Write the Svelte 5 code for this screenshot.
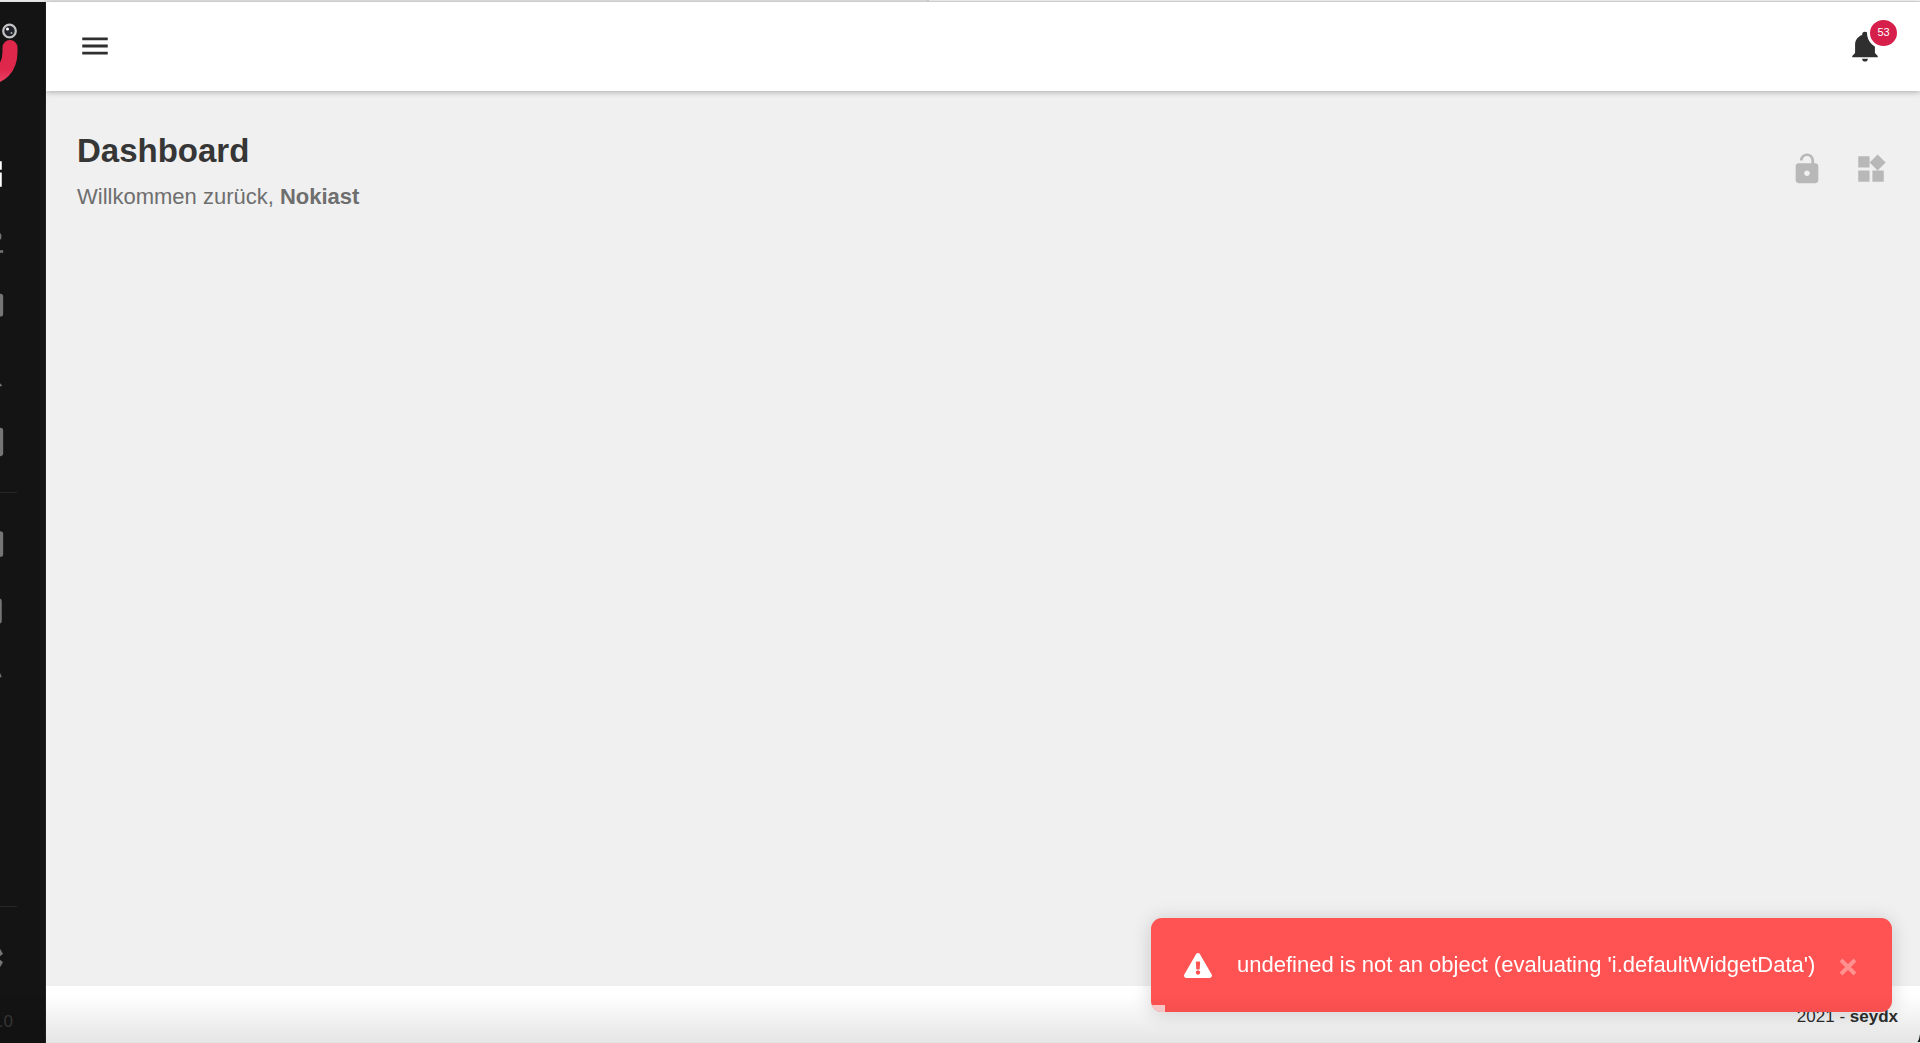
<script>
    const icons = {
        dashboard: "M13 3v6h8V3M13 21h8V11h-8M3 21h8v-6H3M3 13h8V3H3z",
        users: "M18 6a2.800 2.800 0 1 1 0 5.600 2.800 2.800 0 1 1 0-5.600M9 5a4 4 0 1 0 .1 0M2 18.500h20v1.800H2z",
        cameras:
            "M4 6H2v14a2 2 0 0 0 2 2h14v-2H4V6m16-4H8a2 2 0 0 0-2 2v12a2 2 0 0 0 2 2h12a2 2 0 0 0 2-2V4a2 2 0 0 0-2-2z",
        bell: "M21 19v1H3v-1l2-2v-6c0-3.100 2.030-5.830 5-6.710V4a2 2 0 0 1 4 0v.290c2.970.880 5 3.610 5 6.710v6l2 2m-7 2a2 2 0 0 1-4 0",
        camview: "M4 2h16a2 2 0 0 1 2 2v16a2 2 0 0 1-2 2H4a2 2 0 0 1-2-2V4a2 2 0 0 1 2-2z",
        console: "M4 3h16a2 2 0 0 1 2 2v14a2 2 0 0 1-2 2H4a2 2 0 0 1-2-2V5a2 2 0 0 1 2-2z",
        config: "M5 3h14a2 2 0 0 1 2 2v14a2 2 0 0 1-2 2H5a2 2 0 0 1-2-2V5a2 2 0 0 1 2-2z",
        utilization: "M3 11.500a9 9 0 0 1 16.500-4l1.500 4z",
        settings:
            "M12 15.500A3.500 3.500 0 0 1 8.500 12 3.500 3.500 0 0 1 12 8.500a3.500 3.500 0 0 1 3.500 3.500 3.500 3.500 0 0 1-3.500 3.500m7.430-2.530c.04-.32.07-.64.07-.97s-.03-.66-.07-1l2.110-1.630c.19-.15.24-.42.12-.64l-2-3.460c-.12-.22-.39-.31-.61-.22l-2.490 1c-.52-.39-1.060-.73-1.690-.98l-.37-2.650A.506.506 0 0 0 14 2h-4c-.25 0-.46.18-.5.42l-.37 2.650c-.63.25-1.170.59-1.690.98l-2.490-1c-.22-.09-.49 0-.61.22l-2 3.460c-.13.22-.07.49.12.64L4.570 11c-.04.34-.07.67-.07 1s.03.65.07.97l-2.110 1.660c-.19.15-.25.42-.12.64l2 3.460c.12.22.39.3.61.22l2.490-1.010c.52.4 1.060.74 1.690.99l.37 2.650c.04.24.25.42.5.42h4c.25 0 .46-.18.5-.42l.37-2.650c.63-.26 1.170-.59 1.690-.99l2.490 1.010c.22.08.49 0 .61-.22l2-3.460c.12-.22.07-.49-.12-.64z",
        menu: "M3 6h18v2H3zM3 11h18v2H3zM3 16h18v2H3z",
        unlock: "M12 17c1.100 0 2-.9 2-2s-.9-2-2-2-2 .9-2 2 .9 2 2 2zm6-9h-1V6c0-2.760-2.240-5-5-5S7 3.240 7 6h1.900c0-1.710 1.390-3.100 3.100-3.100 1.710 0 3.100 1.390 3.100 3.100v2H6c-1.100 0-2 .9-2 2v10c0 1.100.9 2 2 2h12c1.100 0 2-.9 2-2V10c0-1.100-.9-2-2-2z",
        widgets:
            "M13 13v8h8v-8h-8zM3 21h8v-8H3v8zM3 3v8h8V3H3zm13.660-1.310L11 7.340 16.660 13l5.660-5.660-5.660-5.650z",
    };

    const mainNav = ["dashboard", "users", "cameras", "bell", "camview"];
    const systemNav = ["console", "config", "utilization"];

    let showToast = $state(true);
</script>

{#snippet icon(name)}
    <svg class="icon" viewBox="0 0 24 24" aria-hidden="true">
        <path d={icons[name]} fill-rule="evenodd" />
    </svg>
{/snippet}

<div class="app">
    <div class="tab-strip"><span></span></div>

    <div class="layout">
        <aside class="sidebar">
            <a class="logo" href="#dashboard" aria-label="home">
                <svg viewBox="0 0 58 72" aria-hidden="true">
                    <defs>
                        <linearGradient id="logo-red" gradientUnits="userSpaceOnUse" x1="0" y1="24" x2="0" y2="72">
                            <stop offset="0.6" stop-color="#df274c" />
                            <stop offset="1" stop-color="#f04a6c" />
                        </linearGradient>
                    </defs>
                    <path
                        d="M8 31.500V36c0 33 42 33 42 0v-4.500"
                        fill="none"
                        stroke="url(#logo-red)"
                        stroke-width="15"
                        stroke-linecap="round"
                    />
                    <circle cx="49.500" cy="15" r="6.300" fill="#20232a" stroke="#c4c4c4" stroke-width="2.200" />
                    <circle cx="47.500" cy="13" r="1.500" fill="#ffffff" />
                    <circle cx="51.500" cy="17" r="1" fill="#aaaaaa" />
                </svg>
            </a>

            <nav>
                {#each mainNav as name}
                    <a class="nav-item" class:active={name === "dashboard"} href="#{name}" aria-label={name}>
                        {@render icon(name)}
                    </a>
                {/each}
                <hr />
                {#each systemNav as name}
                    <a class="nav-item" href="#{name}" aria-label={name}>
                        {@render icon(name)}
                    </a>
                {/each}
            </nav>

            <div class="sidebar-bottom">
                <hr />
                <a class="nav-item" href="#settings" aria-label="settings">
                    {@render icon("settings")}
                </a>
                <div class="version">.0</div>
            </div>
        </aside>

        <div class="page">
            <header class="navbar">
                <button type="button" aria-label="menu">{@render icon("menu")}</button>
                <button type="button" class="bell" aria-label="notifications">
                    {@render icon("bell")}
                    <span class="badge">53</span>
                </button>
            </header>

            <main>
                <div class="title">
                    <h1>Dashboard</h1>
                    <p>Willkommen zurück, <b>Nokiast</b></p>
                </div>
                <div class="actions">
                    <button type="button" aria-label="unlock">{@render icon("unlock")}</button>
                    <button type="button" aria-label="widgets">{@render icon("widgets")}</button>
                </div>
            </main>

            <footer>2021 -&nbsp;<b>seydx</b></footer>
        </div>
    </div>
</div>

{#if showToast}
    <div class="toast" role="alert">
        <svg class="warning" viewBox="0 0 576 512" aria-hidden="true">
            <path
                d="M569.500 440c18.500 32-4.700 72-41.600 72H48.100c-36.900 0-60-40-41.600-72L246.400 24c18.500-32 64.700-32 83.200 0l239.900 416zM288 354c-25.400 0-46 20.600-46 46s20.600 46 46 46 46-20.600 46-46-20.600-46-46-46zm-43.700-165.300l7.400 136c.3 6.400 5.600 11.300 12 11.300h48.500c6.400 0 11.600-5 12-11.300l7.400-136c.4-6.900-5.100-12.700-12-12.700h-63.400c-6.900 0-12.300 5.800-12 12.700z"
            />
        </svg>
        <span class="message">undefined is not an object (evaluating 'i.defaultWidgetData')</span>
        <button type="button" class="close" aria-label="close" onclick={() => (showToast = false)}>
            <svg viewBox="0 0 18 18" aria-hidden="true">
                <path d="M2 2l14 14M16 2L2 16" />
            </svg>
        </button>
        <div class="progress"></div>
    </div>
{/if}

<div class="bottom-shade"></div>
<svg class="corner" viewBox="0 0 10 16" aria-hidden="true">
    <path d="M10 0v16H5Q9 10 10 0z" />
</svg>

<style>
    :global(body) {
        margin: 0;
        background: #f0f0f0;
        font-family: "Liberation Sans", Arial, sans-serif;
    }

    .app {
        display: flex;
        flex-direction: column;
        min-height: 100vh;
        overflow: hidden;
    }

    .tab-strip {
        height: 2px;
        background: #f8f8f8;
        border-bottom: 1px solid #e2e2e2;
        box-sizing: border-box;
    }

    .tab-strip span {
        display: block;
        width: 927px;
        height: 1px;
        background: #e6e6e6;
        border-right: 2px solid #d4d4d4;
    }

    .layout {
        display: flex;
        flex: 1;
    }

    /* collapsed, half slid out of the window */
    .sidebar {
        display: flex;
        flex-direction: column;
        width: 114px;
        margin-left: -68px;
        box-sizing: border-box;
        flex-shrink: 0;
        background: #141414;
        border-right: 1px solid #24221f;
    }

    .logo {
        display: block;
        width: 58px;
        height: 72px;
        margin: 14px auto 52px 28px;
    }

    .logo svg {
        display: block;
        width: 58px;
        height: 72px;
    }

    .icon {
        display: block;
        width: 34px;
        height: 34px;
        fill: currentColor;
    }

    .nav-item {
        display: flex;
        align-items: center;
        justify-content: center;
        height: 67px;
        color: #757575;
    }

    .nav-item.active {
        color: #ffffff;
    }

    hr {
        width: 56px;
        height: 1px;
        margin: 17px auto;
        border: 0;
        background: #262626;
    }

    .sidebar-bottom {
        margin-top: auto;
    }

    .version {
        padding: 21px 32px 11px 0;
        color: #383838;
        font-size: 17px;
        line-height: 20px;
        text-align: right;
    }

    .page {
        display: flex;
        flex-direction: column;
        flex: 1;
    }

    button {
        padding: 0;
        border: 0;
        background: none;
        color: inherit;
        font-family: inherit;
        cursor: pointer;
    }

    .navbar {
        display: flex;
        align-items: center;
        justify-content: space-between;
        height: 89px;
        padding: 0 38px 2px 32px;
        box-sizing: border-box;
        background: #ffffff;
        color: #2f2f2f;
        box-shadow: 0 1px 6px rgba(0, 0, 0, 0.3);
    }

    .bell {
        position: relative;
    }

    .badge {
        position: absolute;
        top: -12px;
        right: -18px;
        width: 27px;
        height: 26px;
        border: 3px solid #ffffff;
        border-radius: 50%;
        background: #d61f4a;
        color: #ffffff;
        font-size: 11px;
        line-height: 25px;
        text-align: center;
    }

    main {
        display: flex;
        flex: 1;
        align-items: flex-start;
        justify-content: space-between;
        padding: 36px 32px 0 31px;
    }

    h1 {
        margin: 0;
        color: #363636;
        font-size: 33px;
        line-height: 48px;
    }

    p {
        margin: 0;
        color: #6e6e6e;
        font-size: 22px;
        line-height: 44px;
    }

    .actions {
        display: flex;
        gap: 30px;
        margin-top: 25px;
        color: #b8b8b8;
    }

    footer {
        display: flex;
        align-items: center;
        justify-content: flex-end;
        height: 57px;
        padding: 4px 22px 0 0;
        box-sizing: border-box;
        background: #ffffff;
        color: #2f2f2f;
        font-size: 17px;
    }

    .toast {
        position: fixed;
        right: 28px;
        bottom: 31px;
        display: flex;
        align-items: center;
        height: 94px;
        padding: 0 35px 0 33px;
        border-radius: 11px;
        overflow: hidden;
        background: #ff5252;
        color: #ffffff;
        font-size: 22px;
        box-shadow: 0 2px 20px rgba(0, 0, 0, 0.16);
    }

    .warning {
        width: 28px;
        height: 25px;
        fill: #ffffff;
    }

    .message {
        min-width: 588px;
        margin: 0 14px 0 25px;
    }

    .close svg {
        display: block;
        width: 18px;
        height: 18px;
        margin-top: 4px;
        fill: none;
        stroke: #ff9191;
        stroke-width: 4;
    }

    .progress {
        position: absolute;
        left: 0;
        bottom: 0;
        width: 14px;
        height: 7px;
        background: rgba(255, 255, 255, 0.7);
    }

    .bottom-shade {
        position: fixed;
        left: 0;
        right: 0;
        bottom: 0;
        height: 48px;
        background: linear-gradient(rgba(0, 0, 0, 0), rgba(0, 0, 0, 0.1));
        pointer-events: none;
    }

    .corner {
        position: fixed;
        right: 0;
        bottom: 0;
        width: 5px;
        height: 10px;
        fill: #0d1a16;
    }
</style>
